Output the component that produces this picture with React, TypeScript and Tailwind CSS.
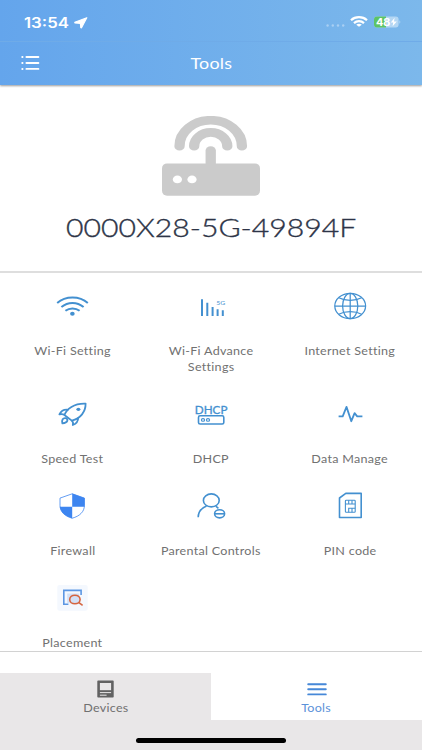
import type { ReactNode } from 'react';

interface Tool {
  id: string;
  label: ReactNode;
  icon: ReactNode;
}

const RouterIcon = () => (
  <svg width="98" height="80" viewBox="0 0 98 80" fill="none">
    <g transform="scale(1.2 1)" stroke="#cbcbcb" strokeWidth="8.6" strokeLinecap="round">
      <path d="M14.6 30.2a26 26 0 0 1 52 0" />
      <path d="M26.8 30.2a13.8 13.8 0 0 1 27.6 0" />
      <path d="M40.6 34.5V52" />
    </g>
    <rect y="47.4" width="98" height="32.3" rx="5" fill="#cbcbcb" />
    <ellipse cx="15.4" cy="63.4" rx="4.6" ry="3.9" fill="#fff" />
    <ellipse cx="30" cy="63.4" rx="4.6" ry="3.9" fill="#fff" />
  </svg>
);

const ToolIcon = ({ children }: { children: ReactNode }) => (
  <svg width="40" height="32" viewBox="0 0 40 32" fill="none" stroke="#4390d0" strokeWidth="1.6">
    {children}
  </svg>
);

const tools: Tool[] = [
  {
    id: 'wifi',
    label: 'Wi-Fi Setting',
    icon: (
      <ToolIcon>
        <g strokeWidth="2">
          <path d="M5.2 13C13.5 5.8 27.5 5.8 35.8 13" />
          <path d="M9.4 17C16 11.5 25 11.5 31.6 17" />
          <path d="M13.4 20.7C17.5 17.6 23.5 17.6 27.6 20.7" />
        </g>
        <ellipse cx="20.4" cy="23.7" rx="2.3" ry="2" fill="#4390d0" stroke="none" />
      </ToolIcon>
    ),
  },
  {
    id: 'wifi-advance',
    label: (
      <>
        Wi-Fi Advance
        <br />
        Settings
      </>
    ),
    icon: (
      <ToolIcon>
        <path strokeWidth="2" d="M11 9.3V26M16.3 12.8V26M21.6 17V26M26.6 19.3V26M31.8 20.3V26" />
        <text x="25.2" y="14.6" fontSize="5.8" textLength="9" lengthAdjust="spacingAndGlyphs" fill="#4390d0" stroke="none" className="font-[Lato,sans-serif]">
          5G
        </text>
      </ToolIcon>
    ),
  },
  {
    id: 'internet',
    label: 'Internet Setting',
    icon: (
      <ToolIcon>
        <g strokeWidth="1.25">
          <ellipse cx="20.2" cy="16" rx="15.4" ry="12.6" />
          <ellipse cx="20.2" cy="16" rx="7.6" ry="12.6" />
          <path d="M20.2 3.4V28.6M4.8 16H35.6" />
          <path d="M8.8 7.8C15 11.2 25.4 11.2 31.6 7.8M8.8 24.2C15 20.8 25.4 20.8 31.6 24.2" />
        </g>
      </ToolIcon>
    ),
  },
  {
    id: 'speed',
    label: 'Speed Test',
    icon: (
      <ToolIcon>
        <g strokeWidth="1.8" strokeLinejoin="round">
          <path d="M12.4 17C14.5 11.1 22 5.1 33.6 5.6C33.8 13.6 28.5 20.6 19.8 22.6Z" />
          <path d="M16.4 11.8C12.4 11.2 9.2 12.6 7.4 16.4C9.2 15.8 11 16 12.6 16.8" />
          <path d="M26.2 19.4C26.2 23 24.4 25.6 20.8 27C21.4 25.4 21 23.8 19.8 22.6" />
          <path d="M10.4 25.4C9.4 21.8 11 19.8 13.6 20.2C16.6 21 16.2 25 10.4 25.4Z" />
        </g>
        <ellipse cx="26.4" cy="11.3" rx="2" ry="1.6" fill="#4390d0" stroke="none" />
      </ToolIcon>
    ),
  },
  {
    id: 'dhcp',
    label: 'DHCP',
    icon: (
      <ToolIcon>
        <text x="3.8" y="15.6" fontSize="10.8" textLength="32.6" lengthAdjust="spacingAndGlyphs" fill="#4390d0" stroke="#4390d0" strokeWidth="0.3" className="font-[Lato,sans-serif]">
          DHCP
        </text>
        <rect x="7.5" y="17.8" width="25.3" height="8.2" rx="1.6" />
        <ellipse cx="12" cy="21.9" rx="1.6" ry="1.3" strokeWidth="1.1" />
        <ellipse cx="17" cy="21.9" rx="1.6" ry="1.3" strokeWidth="1.1" />
      </ToolIcon>
    ),
  },
  {
    id: 'data',
    label: 'Data Manage',
    icon: (
      <ToolIcon>
        <path strokeWidth="1.8" strokeLinejoin="round" d="M8.6 18.3H12.7L16.5 8.9L21.3 23.2L24.6 15.2L27.2 18.3H32.4" />
      </ToolIcon>
    ),
  },
  {
    id: 'firewall',
    label: 'Firewall',
    icon: (
      <ToolIcon>
        <path d="M20.2 3.4L32.6 8V16.7H20.2ZM20.2 16.7V28.4C13.4 26.4 8.4 22 7.8 16.7Z" fill="#3d85f0" stroke="none" />
        <path
          d="M20.2 3.8L32.4 8.1V15.4C32.4 21.8 27.6 26.2 20.2 28.2C12.8 26.2 8 21.8 8 15.4V8.1Z"
          stroke="#3d85f0"
          strokeWidth="0.8"
        />
      </ToolIcon>
    ),
  },
  {
    id: 'parental',
    label: 'Parental Controls',
    icon: (
      <ToolIcon>
        <ellipse cx="20.3" cy="10.4" rx="7.9" ry="6.5" />
        <path d="M7.2 27.3C7.2 22.1 10.4 18.1 15.6 16.1M24.8 16.1L27.4 18.3" />
        <ellipse cx="28.6" cy="23.8" rx="5" ry="4.1" />
        <path d="M24 23.8H33.4" />
      </ToolIcon>
    ),
  },
  {
    id: 'pin',
    label: 'PIN code',
    icon: (
      <ToolIcon>
        <path d="M15.8 3.4H31.2V27.5H9.5V8Z" strokeLinejoin="round" />
        <g strokeWidth="1.1">
          <rect x="15.4" y="10.3" width="9.8" height="11.9" rx="0.8" />
          <path d="M15.4 14H25.2M18.7 10.3V14M22 10.3V14M18.7 22.2V18.2H25.2M22 18.2V22.2" />
        </g>
      </ToolIcon>
    ),
  },
  {
    id: 'placement',
    label: 'Placement',
    icon: (
      <ToolIcon>
        <rect x="5.3" y="2.9" width="30.4" height="25.8" rx="2" fill="#f4f8fe" stroke="none" />
        <rect x="15.2" y="11.5" width="12" height="9.6" fill="#d3e1f7" stroke="none" />
        <path d="M29.1 12.9V8.4H11.8V22.2H16.4" stroke="#5c97e3" />
        <ellipse cx="22.9" cy="17.5" rx="5.2" ry="4.3" stroke="#d56540" />
        <path d="M26.6 20.3L30.6 23.3" stroke="#d56540" />
      </ToolIcon>
    ),
  },
];

const StatusBar = () => (
  <div className="flex h-[42px] items-start border-b border-[#6fabe8] pt-[15px] pr-[21px] pl-6 text-white">
    <span className="w-[50px] origin-left scale-x-[1.2] font-[Inter,sans-serif] text-[14px] leading-[15px] font-semibold">
      13:54
    </span>
    <svg className="mt-[2px]" width="14" height="12" viewBox="0 0 14 12" fill="#fff" stroke="#fff" strokeWidth="1.2" strokeLinejoin="round">
      <path d="M12.8 0.8L0.8 5.2L0.9 5.9L6.4 6.3L6.8 10.7L7.5 10.8Z" />
    </svg>
    <div className="ml-auto flex">
      <svg className="mt-[9px] mr-[5px]" width="19" height="3" viewBox="0 0 19 3" fill="#a9cff3">
        <circle cx="1.6" cy="1.5" r="1.2" />
        <circle cx="6.8" cy="1.5" r="1.2" />
        <circle cx="12" cy="1.5" r="1.2" />
        <circle cx="17.2" cy="1.5" r="1.2" />
      </svg>
      <svg className="mt-[1px] mr-[6px]" width="18" height="11" viewBox="0 0 18 11" fill="none" stroke="#fff" strokeWidth="2.2">
        <path d="M1 4.2C5.4 0.2 12.6 0.2 17 4.2" />
        <path d="M4 7.1C6.8 4.5 11.2 4.5 14 7.1" />
        <path d="M9 10.8L6.2 8.7C7.8 7.5 10.2 7.5 11.8 8.7Z" fill="#fff" stroke="none" />
      </svg>
      <svg className="mt-[1px]" width="27" height="12" viewBox="0 0 27 12">
        <rect x="0" y="0.5" width="24.6" height="11" rx="3" fill="#b4d7f4" />
        <path d="M3 0.5H12V11.5H3A3 3 0 0 1 0 8.5V3.5A3 3 0 0 1 3 0.5Z" fill="#5dc466" />
        <path d="M25.4 4.2C26.6 4.8 26.6 7.2 25.4 7.8Z" fill="#b4d7f4" />
        <text x="2" y="9.5" fontSize="9.8" textLength="14.4" lengthAdjust="spacingAndGlyphs" fill="#fff" className="font-[Inter,sans-serif] font-bold">
          48
        </text>
        <path d="M20.6 1.8L16.8 6.6H19.2L18.6 10.2L22.8 5.4H20Z" fill="#fff" />
      </svg>
    </div>
  </div>
);

const Header = () => (
  <header className="h-[85px] bg-linear-to-r from-[#64a5ec] to-[#7cb8eb] shadow-[0_1px_2px_rgba(0,0,0,0.4)]">
    <StatusBar />
    <div className="grid h-[42px] grid-cols-3 items-center pr-[21px] pl-[21px]">
      <svg width="19" height="14" viewBox="0 0 19 14" fill="none" stroke="#fff" strokeWidth="1.9" strokeLinecap="round">
        <path d="M5.4 1H17.4M5.4 7H17.4M5.4 12.9H17.4" />
        <path strokeWidth="2" d="M1.3 1H1.5M1.3 7H1.5M1.3 12.9H1.5" />
      </svg>
      <h1 className="scale-x-[1.15] text-center text-[15.5px] leading-5 tracking-[0.2px] text-white">Tools</h1>
    </div>
  </header>
);

const TabBar = () => (
  <nav className="mt-[21px] flex h-[77px] flex-col justify-between bg-[#e9e7e8]">
    <div className="grid h-[47px] grid-cols-2">
      <div className="flex flex-col items-center pt-[7px] text-[#707070]">
        <svg width="17" height="18" viewBox="0 0 17 18">
          <rect x="0.3" y="0.6" width="16.4" height="17" rx="0.8" fill="#626262" />
          <rect x="2.9" y="3" width="11.2" height="7.2" fill="#e9e7e8" />
          <path d="M2.9 12.6H14.1M2.9 15.2H9.6" stroke="#e9e7e8" strokeWidth="1" />
        </svg>
        <span className="mt-[2px] scale-x-[1.14] text-[11px] leading-4 tracking-[0.25px]">Devices</span>
      </div>
      <div className="flex flex-col items-center bg-white pt-[7px] text-[#5b92d9]">
        <svg width="20" height="18" viewBox="0 0 20 18" stroke="#4688d8" strokeWidth="1.9" strokeLinecap="round">
          <path d="M1.2 4.2H18.8M1.2 9.3H18.8M1.2 14.4H18.8" />
        </svg>
        <span className="mt-[2px] scale-x-[1.14] text-[11px] leading-4 tracking-[0.25px]">Tools</span>
      </div>
    </div>
    <div className="mb-[7px] h-[5px] w-[150px] self-center rounded-full bg-black" />
  </nav>
);

export default function App() {
  return (
    <div className="flex h-[750px] w-[422px] flex-col overflow-hidden bg-white font-[Lato,sans-serif]">
      <Header />
      <section className="flex h-[188px] flex-col items-center border-b-2 border-[#dedede] pt-[31px]">
        <RouterIcon />
        <h2 className="mt-[13px] scale-x-[1.16] text-[26px] leading-9 font-light whitespace-nowrap text-[#2d3447] [-webkit-text-stroke:0.35px_#2d3447]">
          0000X28-5G-49894F
        </h2>
      </section>
      <section className="grid h-[379px] grid-cols-3 content-start gap-y-[22.5px] border-b border-[#d2d2d2] px-[3px] pt-[17px]">
        {tools.map((tool) => (
          <div key={tool.id} className="flex flex-col items-center">
            {tool.icon}
            <p className="mt-[21.4px] scale-x-[1.14] text-center text-[11px] leading-4 tracking-[0.25px] whitespace-nowrap text-[#717171]">
              {tool.label}
            </p>
          </div>
        ))}
      </section>
      <TabBar />
    </div>
  );
}
